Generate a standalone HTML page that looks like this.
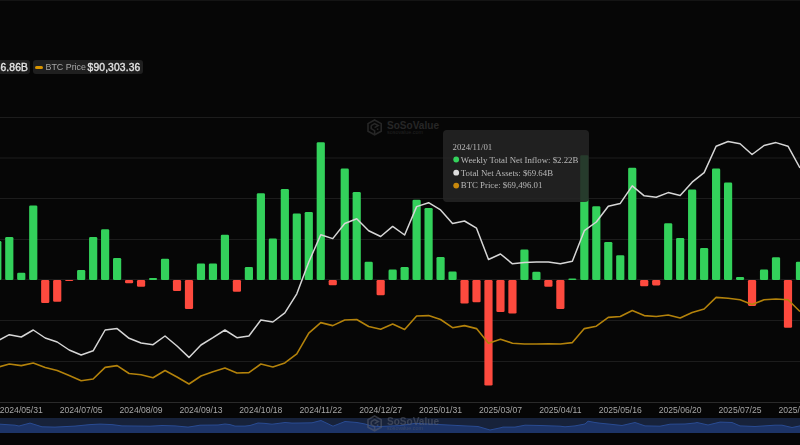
<!DOCTYPE html>
<html><head><meta charset="utf-8">
<style>
html,body{margin:0;padding:0;}
body{width:800px;height:445px;overflow:hidden;background:#060606;position:relative;font-family:"Liberation Sans",sans-serif;}
.top{position:absolute;left:0;top:0;width:800px;height:1px;background:#141414;}
svg{position:absolute;left:0;top:0;}
.lg{position:absolute;top:60px;height:14px;background:#1f1f1f;border-radius:3px;white-space:nowrap;}
.lg b{position:absolute;top:0;color:#e2e2e2;font-weight:normal;font-size:10.3px;letter-spacing:0.12px;line-height:15px;-webkit-text-stroke:0.35px #e2e2e2;}
.lg span{position:absolute;top:0;color:#a6a6a6;font-size:8.9px;line-height:15px;}
.dash{position:absolute;left:2px;top:6px;width:8px;height:3px;border-radius:1.5px;background:#d89400;}
.tip{position:absolute;left:442.5px;top:130px;width:146.5px;height:71.5px;background:rgba(37,37,37,0.87);border-radius:4px;font-family:"Liberation Serif",serif;font-size:8.8px;color:#b9b9b9;}
.tip div{position:absolute;left:10.5px;white-space:nowrap;line-height:10px;}
.tip i{position:absolute;left:0;top:2.5px;width:5.5px;height:5.5px;border-radius:50%;}
.tip span{position:absolute;left:8px;top:0;}
.ax{position:absolute;top:405px;font-size:8.6px;line-height:10px;color:#a6a6a6;white-space:nowrap;}
.gs{will-change:transform;}
</style></head><body>
<div class="top"></div>
<svg width="800" height="445" viewBox="0 0 800 445">
<line x1="0" y1="117.5" x2="800" y2="117.5" stroke="#1c1c1c" stroke-width="1"/>
<line x1="0" y1="158" x2="800" y2="158" stroke="#1c1c1c" stroke-width="1"/>
<line x1="0" y1="198.5" x2="800" y2="198.5" stroke="#1c1c1c" stroke-width="1"/>
<line x1="0" y1="239.5" x2="800" y2="239.5" stroke="#1c1c1c" stroke-width="1"/>
<line x1="0" y1="279.5" x2="800" y2="279.5" stroke="#1c1c1c" stroke-width="1"/>
<line x1="0" y1="320.5" x2="800" y2="320.5" stroke="#1c1c1c" stroke-width="1"/>
<line x1="0" y1="361.5" x2="800" y2="361.5" stroke="#1c1c1c" stroke-width="1"/>
<line x1="0" y1="402.5" x2="800" y2="402.5" stroke="#2a2a2a" stroke-width="1"/>
<g fill="none" stroke="#262626" stroke-width="1.6">
<path d="M374.6 120 L381.2 123.6 L381.2 131.2 L374.6 134.8 L368 131.2 L368 123.6 Z"/>
<path d="M371.2 125.6 L371.2 128.6 L374.6 130.6 L374.6 134.8 M371.2 125.6 L374.6 123.6 L378.2 125.6 L374.6 127.6"/>
<rect x="376.8" y="128.4" width="1.6" height="1.6" fill="#262626" stroke="none"/>
</g>
<text x="387" y="128.6" font-family="Liberation Sans" font-weight="bold" font-size="10.5" fill="#262626" textLength="52" lengthAdjust="spacingAndGlyphs">SoSoValue</text>
<text x="387" y="134.3" font-family="Liberation Sans" font-size="5.6" fill="#222" textLength="36" lengthAdjust="spacingAndGlyphs">sosovalue.com</text>
<rect x="-6.79" y="241" width="8.2" height="39.00" rx="1.3" fill="#33d15b"/>
<rect x="5.19" y="237" width="8.2" height="43.00" rx="1.3" fill="#33d15b"/>
<rect x="17.17" y="272.7" width="8.2" height="7.30" rx="1.3" fill="#33d15b"/>
<rect x="29.15" y="205.4" width="8.2" height="74.60" rx="1.3" fill="#33d15b"/>
<rect x="41.13" y="280" width="8.2" height="23.00" rx="1.3" fill="#fd4a3e"/>
<rect x="53.11" y="280" width="8.2" height="21.80" rx="1.3" fill="#fd4a3e"/>
<rect x="65.09" y="280" width="8.2" height="1.00" rx="1.3" fill="#fd4a3e"/>
<rect x="77.07" y="270" width="8.2" height="10.00" rx="1.3" fill="#33d15b"/>
<rect x="89.05" y="237" width="8.2" height="43.00" rx="1.3" fill="#33d15b"/>
<rect x="101.03" y="229.3" width="8.2" height="50.70" rx="1.3" fill="#33d15b"/>
<rect x="113.01" y="258" width="8.2" height="22.00" rx="1.3" fill="#33d15b"/>
<rect x="124.99" y="280" width="8.2" height="3.20" rx="1.3" fill="#fd4a3e"/>
<rect x="136.97" y="280" width="8.2" height="6.80" rx="1.3" fill="#fd4a3e"/>
<rect x="148.95" y="278.1" width="8.2" height="1.90" rx="1.3" fill="#33d15b"/>
<rect x="160.93" y="258.8" width="8.2" height="21.20" rx="1.3" fill="#33d15b"/>
<rect x="172.91" y="280" width="8.2" height="11.00" rx="1.3" fill="#fd4a3e"/>
<rect x="184.89" y="280" width="8.2" height="29.00" rx="1.3" fill="#fd4a3e"/>
<rect x="196.87" y="263.5" width="8.2" height="16.50" rx="1.3" fill="#33d15b"/>
<rect x="208.85" y="263.5" width="8.2" height="16.50" rx="1.3" fill="#33d15b"/>
<rect x="220.83" y="234.7" width="8.2" height="45.30" rx="1.3" fill="#33d15b"/>
<rect x="232.81" y="280" width="8.2" height="11.70" rx="1.3" fill="#fd4a3e"/>
<rect x="244.79" y="267" width="8.2" height="13.00" rx="1.3" fill="#33d15b"/>
<rect x="256.77" y="193.3" width="8.2" height="86.70" rx="1.3" fill="#33d15b"/>
<rect x="268.75" y="238.6" width="8.2" height="41.40" rx="1.3" fill="#33d15b"/>
<rect x="280.73" y="189" width="8.2" height="91.00" rx="1.3" fill="#33d15b"/>
<rect x="292.71" y="213.5" width="8.2" height="66.50" rx="1.3" fill="#33d15b"/>
<rect x="304.69" y="212" width="8.2" height="68.00" rx="1.3" fill="#33d15b"/>
<rect x="316.67" y="142.2" width="8.2" height="137.80" rx="1.3" fill="#33d15b"/>
<rect x="328.65" y="280" width="8.2" height="5.30" rx="1.3" fill="#fd4a3e"/>
<rect x="340.63" y="168.5" width="8.2" height="111.50" rx="1.3" fill="#33d15b"/>
<rect x="352.61" y="191.9" width="8.2" height="88.10" rx="1.3" fill="#33d15b"/>
<rect x="364.59" y="261.7" width="8.2" height="18.30" rx="1.3" fill="#33d15b"/>
<rect x="376.57" y="280" width="8.2" height="15.30" rx="1.3" fill="#fd4a3e"/>
<rect x="388.55" y="269.6" width="8.2" height="10.40" rx="1.3" fill="#33d15b"/>
<rect x="400.53" y="267" width="8.2" height="13.00" rx="1.3" fill="#33d15b"/>
<rect x="412.51" y="199.8" width="8.2" height="80.20" rx="1.3" fill="#33d15b"/>
<rect x="424.49" y="208" width="8.2" height="72.00" rx="1.3" fill="#33d15b"/>
<rect x="436.47" y="257" width="8.2" height="23.00" rx="1.3" fill="#33d15b"/>
<rect x="448.45" y="271.4" width="8.2" height="8.60" rx="1.3" fill="#33d15b"/>
<rect x="460.43" y="280" width="8.2" height="23.50" rx="1.3" fill="#fd4a3e"/>
<rect x="472.41" y="280" width="8.2" height="22.30" rx="1.3" fill="#fd4a3e"/>
<rect x="484.39" y="280" width="8.2" height="105.60" rx="1.3" fill="#fd4a3e"/>
<rect x="496.37" y="280" width="8.2" height="32.00" rx="1.3" fill="#fd4a3e"/>
<rect x="508.35" y="280" width="8.2" height="33.50" rx="1.3" fill="#fd4a3e"/>
<rect x="520.33" y="249.4" width="8.2" height="30.60" rx="1.3" fill="#33d15b"/>
<rect x="532.31" y="271.7" width="8.2" height="8.30" rx="1.3" fill="#33d15b"/>
<rect x="544.29" y="280" width="8.2" height="6.80" rx="1.3" fill="#fd4a3e"/>
<rect x="556.27" y="280" width="8.2" height="29.00" rx="1.3" fill="#fd4a3e"/>
<rect x="568.25" y="278.6" width="8.2" height="1.40" rx="1.3" fill="#33d15b"/>
<rect x="580.23" y="155.3" width="8.2" height="124.70" rx="1.3" fill="#33d15b"/>
<rect x="592.21" y="206.3" width="8.2" height="73.70" rx="1.3" fill="#33d15b"/>
<rect x="604.19" y="241.9" width="8.2" height="38.10" rx="1.3" fill="#33d15b"/>
<rect x="616.17" y="255.2" width="8.2" height="24.80" rx="1.3" fill="#33d15b"/>
<rect x="628.15" y="167.8" width="8.2" height="112.20" rx="1.3" fill="#33d15b"/>
<rect x="640.13" y="280" width="8.2" height="6.20" rx="1.3" fill="#fd4a3e"/>
<rect x="652.11" y="280" width="8.2" height="5.40" rx="1.3" fill="#fd4a3e"/>
<rect x="664.09" y="223.2" width="8.2" height="56.80" rx="1.3" fill="#33d15b"/>
<rect x="676.07" y="237.9" width="8.2" height="42.10" rx="1.3" fill="#33d15b"/>
<rect x="688.05" y="189.4" width="8.2" height="90.60" rx="1.3" fill="#33d15b"/>
<rect x="700.03" y="248" width="8.2" height="32.00" rx="1.3" fill="#33d15b"/>
<rect x="712.01" y="168.5" width="8.2" height="111.50" rx="1.3" fill="#33d15b"/>
<rect x="723.99" y="182.5" width="8.2" height="97.50" rx="1.3" fill="#33d15b"/>
<rect x="735.97" y="277" width="8.2" height="3.00" rx="1.3" fill="#33d15b"/>
<rect x="747.95" y="280" width="8.2" height="25.90" rx="1.3" fill="#fd4a3e"/>
<rect x="759.93" y="269.6" width="8.2" height="10.40" rx="1.3" fill="#33d15b"/>
<rect x="771.91" y="257.3" width="8.2" height="22.70" rx="1.3" fill="#33d15b"/>
<rect x="783.89" y="280" width="8.2" height="47.70" rx="1.3" fill="#fd4a3e"/>
<rect x="795.87" y="261.7" width="8.2" height="18.30" rx="1.3" fill="#33d15b"/>
<polyline points="-2.69,367.3 9.29,364 21.27,365.6 33.25,363 45.23,367.4 57.21,370.5 69.19,375.6 81.17,380.8 93.15,379 105.13,367.4 117.11,365.6 129.09,373.5 141.07,374.7 153.05,377.7 165.03,370.5 177.01,377 188.99,384 200.97,376 212.95,371.7 224.93,368 236.91,373 248.89,372.6 260.87,364 272.85,367 284.83,362.9 296.81,353.8 308.79,333.2 320.77,322.6 332.75,325.6 344.73,320 356.71,319.5 368.69,326.5 380.67,329.2 392.65,324 404.63,329.5 416.61,316 428.59,315.6 440.57,319.5 452.55,327.7 464.53,325.6 476.51,328.6 488.49,343.2 500.47,339.2 512.45,343.2 524.43,344 536.41,344 548.39,343.8 560.37,344 572.35,342.6 584.33,328.6 596.31,326.2 608.29,317.4 620.27,316.5 632.25,310.5 644.23,315.6 656.21,316.5 668.19,315 680.17,318 692.15,312.6 704.13,309 716.11,297.4 728.09,298.3 740.07,299.8 752.05,304.4 764.03,299.8 776.01,299 787.99,299.8 799.97,311.5" fill="none" stroke="#b3820b" stroke-width="1.6" stroke-linejoin="round"/>
<polyline points="-2.69,341 9.29,334.7 21.27,337 33.25,330 45.23,338 57.21,342 69.19,350 81.17,355 93.15,350.8 105.13,330 117.11,328.6 129.09,338.3 141.07,343 153.05,344.7 165.03,336 177.01,346 188.99,357.4 200.97,345 212.95,337.7 224.93,330 236.91,337.7 248.89,336 260.87,320 272.85,322 284.83,312.9 296.81,293.8 308.79,262 320.77,234.7 332.75,238.6 344.73,223.5 356.71,218.8 368.69,230.7 380.67,236.5 392.65,226.4 404.63,235 416.61,206.6 428.59,202.7 440.57,209.9 452.55,223.5 464.53,221 476.51,228.2 488.49,259.5 500.47,254 512.45,263.8 524.43,262.4 536.41,262 548.39,262 560.37,263.8 572.35,261.3 584.33,230.7 596.31,222 608.29,206.3 620.27,203.4 632.25,185.8 644.23,195.8 656.21,197.3 668.19,192.6 680.17,195.5 692.15,182.2 704.13,172.6 716.11,146.2 728.09,141.5 740.07,143.7 752.05,154.5 764.03,145.5 776.01,142.6 787.99,146.2 799.97,168" fill="none" stroke="#d6d6d6" stroke-width="1.5" stroke-linejoin="round"/>
</svg>
<div class="lg gs" style="left:-40px;width:70px"><b style="right:2px">$66.86B</b></div>
<div class="lg gs" style="left:33px;width:110px"><i class="dash"></i><span style="left:12.5px">BTC Price</span><b style="left:54.6px">$90,303.36</b></div>
<div class="gs"><div class="ax" style="left:-8.73px;width:60px;text-align:center">2024/05/31</div>
<div class="ax" style="left:51.17px;width:60px;text-align:center">2024/07/05</div>
<div class="ax" style="left:111.07px;width:60px;text-align:center">2024/08/09</div>
<div class="ax" style="left:170.97px;width:60px;text-align:center">2024/09/13</div>
<div class="ax" style="left:230.87px;width:60px;text-align:center">2024/10/18</div>
<div class="ax" style="left:290.77px;width:60px;text-align:center">2024/11/22</div>
<div class="ax" style="left:350.67px;width:60px;text-align:center">2024/12/27</div>
<div class="ax" style="left:410.57px;width:60px;text-align:center">2025/01/31</div>
<div class="ax" style="left:470.47px;width:60px;text-align:center">2025/03/07</div>
<div class="ax" style="left:530.37px;width:60px;text-align:center">2025/04/11</div>
<div class="ax" style="left:590.27px;width:60px;text-align:center">2025/05/16</div>
<div class="ax" style="left:650.17px;width:60px;text-align:center">2025/06/20</div>
<div class="ax" style="left:710.07px;width:60px;text-align:center">2025/07/25</div>
<div class="ax" style="left:769.97px;width:60px;text-align:center">2025/08/29</div>
</div><svg width="800" height="445" viewBox="0 0 800 445" style="position:absolute;left:0;top:0">
<rect x="0" y="418" width="800" height="15" fill="#17223a"/>
<polygon points="0,433 0.0,424.2 15.0,425.2 19.0,426.0 30.0,423.1 42.0,426.8 55.0,427.1 75.0,426.1 90.0,424.6 100.0,424.1 112.0,424.6 122.0,425.9 150.0,426.2 162.0,425.5 175.0,425.9 188.0,427.1 192.0,426.5 200.0,425.2 218.0,425.0 225.0,424.0 230.0,424.6 235.0,426.1 245.0,426.1 250.0,425.5 258.0,423.0 265.0,423.4 272.0,424.2 280.0,423.2 285.0,422.5 292.0,423.1 300.0,423.0 312.0,422.8 321.0,420.5 333.0,426.2 345.0,421.5 357.0,422.5 365.0,424.0 372.0,426.2 380.0,426.5 400.0,425.6 415.0,423.4 440.0,424.6 465.0,425.9 478.0,426.5 490.0,430.0 500.0,427.9 503.0,427.1 515.0,427.1 525.0,425.2 540.0,425.5 560.0,426.2 565.0,426.8 575.0,425.9 585.0,424.0 588.0,421.2 595.0,422.5 600.0,423.2 610.0,424.2 622.0,425.5 635.0,422.5 645.0,425.9 660.0,426.2 670.0,424.2 685.0,424.0 695.0,423.0 697.0,422.5 700.0,423.2 708.0,425.0 720.0,422.1 732.0,422.5 740.0,425.9 755.0,426.5 775.0,425.2 782.0,425.2 792.0,427.5 800.0,425.9 800,433" fill="#1d3467"/>
<polyline points="0.0,424.2 15.0,425.2 19.0,426.0 30.0,423.1 42.0,426.8 55.0,427.1 75.0,426.1 90.0,424.6 100.0,424.1 112.0,424.6 122.0,425.9 150.0,426.2 162.0,425.5 175.0,425.9 188.0,427.1 192.0,426.5 200.0,425.2 218.0,425.0 225.0,424.0 230.0,424.6 235.0,426.1 245.0,426.1 250.0,425.5 258.0,423.0 265.0,423.4 272.0,424.2 280.0,423.2 285.0,422.5 292.0,423.1 300.0,423.0 312.0,422.8 321.0,420.5 333.0,426.2 345.0,421.5 357.0,422.5 365.0,424.0 372.0,426.2 380.0,426.5 400.0,425.6 415.0,423.4 440.0,424.6 465.0,425.9 478.0,426.5 490.0,430.0 500.0,427.9 503.0,427.1 515.0,427.1 525.0,425.2 540.0,425.5 560.0,426.2 565.0,426.8 575.0,425.9 585.0,424.0 588.0,421.2 595.0,422.5 600.0,423.2 610.0,424.2 622.0,425.5 635.0,422.5 645.0,425.9 660.0,426.2 670.0,424.2 685.0,424.0 695.0,423.0 697.0,422.5 700.0,423.2 708.0,425.0 720.0,422.1 732.0,422.5 740.0,425.9 755.0,426.5 775.0,425.2 782.0,425.2 792.0,427.5 800.0,425.9" fill="none" stroke="#294b92" stroke-width="1"/>
<g transform="translate(0,296)" opacity="0.55">
<g fill="none" stroke="#5a6070" stroke-width="1.6">
<path d="M374.6 120 L381.2 123.6 L381.2 131.2 L374.6 134.8 L368 131.2 L368 123.6 Z"/>
<path d="M371.2 125.6 L371.2 128.6 L374.6 130.6 L374.6 134.8 M371.2 125.6 L374.6 123.6 L378.2 125.6 L374.6 127.6"/>
<rect x="376.8" y="128.4" width="1.6" height="1.6" fill="#5a6070" stroke="none"/>
</g>
<text x="387" y="128.6" font-family="Liberation Sans" font-weight="bold" font-size="10.5" fill="#5a6070" textLength="52" lengthAdjust="spacingAndGlyphs">SoSoValue</text>
<text x="387" y="134.3" font-family="Liberation Sans" font-size="5.6" fill="#50586a" textLength="36" lengthAdjust="spacingAndGlyphs">sosovalue.com</text>
</g>
</svg>
<div class="tip">
<svg width="30" height="72" style="position:absolute;left:0;top:0"><circle cx="13.2" cy="29.5" r="2.9" fill="#34d25c"/><circle cx="13.2" cy="42.7" r="2.9" fill="#dedede"/><circle cx="13.2" cy="55.6" r="2.9" fill="#c8880c"/></svg>
<div style="top:12px;left:10px">2024/11/01</div>
<div style="top:24.6px;left:18.3px">Weekly Total Net Inflow: $2.22B</div>
<div style="top:37.6px;left:18.3px">Total Net Assets: $69.64B</div>
<div style="top:50.4px;left:18.3px">BTC Price: $69,496.01</div>
</div>
</body></html>
